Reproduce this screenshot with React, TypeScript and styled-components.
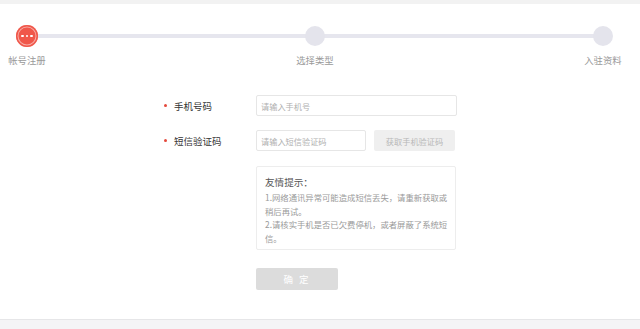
import React from "react";
import styled, { createGlobalStyle } from "styled-components";

const GlobalStyle = createGlobalStyle`
  html, body { margin: 0; padding: 0; background: #fff; }
  body { font-family: "Noto Sans CJK SC", "Noto Sans", sans-serif; }
  * { box-sizing: border-box; }
`;

const Page = styled.div`
  width: 640px;
  height: 329px;
  display: flex;
  flex-direction: column;
  background: #fff;
  overflow: hidden;
`;

const TopBand = styled.div`
  height: 4px;
  background: #f2f2f2;
  flex: none;
`;

const Stepper = styled.div`
  position: relative;
  display: flex;
  justify-content: space-between;
  padding: 21px 18px 0 8px;
`;

const Track = styled.div`
  position: absolute;
  top: 30px;
  left: 27px;
  right: 37px;
  height: 4px;
  background: #e6e6ee;
  border-radius: 2px;
`;

const Step = styled.div`
  position: relative;
  width: 38px;
  display: flex;
  flex-direction: column;
  align-items: center;
`;

const CircleSlot = styled.div`
  height: 22px;
  display: flex;
  align-items: center;
  justify-content: center;
`;

const Circle = styled.div<{ $active?: boolean }>`
  width: ${(p) => (p.$active ? 22 : 20)}px;
  height: ${(p) => (p.$active ? 22 : 20)}px;
  border-radius: 50%;
  background: ${(p) => (p.$active ? "#f0574a" : "#e4e4ec")};
  box-shadow: ${(p) =>
    p.$active
      ? "inset 0 0 0 1.5px #f0574a, inset 0 0 0 2.5px rgba(255,255,255,0.5)"
      : "none"};
  display: flex;
  align-items: center;
  justify-content: center;
  gap: 2px;
`;

const Dot = styled.span`
  width: 2.4px;
  height: 2.4px;
  border-radius: 50%;
  background: #fff;
`;

const StepLabel = styled.div`
  margin-top: 7px;
  font-size: 9.4px;
  line-height: 12px;
  color: #9a9a9a;
  white-space: nowrap;
`;

const Form = styled.div`
  display: flex;
  flex-direction: column;
  padding-left: 163px;
  margin-top: 29px;
`;

const Row = styled.div<{ $gap?: number }>`
  display: flex;
  align-items: center;
  margin-bottom: ${(p) => p.$gap ?? 14}px;
`;

const Label = styled.div`
  width: 93px;
  display: flex;
  align-items: center;
  font-size: 9.5px;
  color: #333;
  white-space: nowrap;
`;

const Required = styled.span`
  width: 3px;
  height: 3px;
  border-radius: 50%;
  background: #e5483b;
  margin-right: 7px;
  margin-left: 1px;
`;

const Field = styled.div`
  display: flex;
  gap: 8px;
`;

const Input = styled.input<{ $w: number }>`
  width: ${(p) => p.$w}px;
  height: 21px;
  border: 1px solid #e6e6e6;
  border-radius: 2px;
  padding: 0 4px;
  font-family: inherit;
  font-size: 8.2px;
  color: #333;
  outline: none;
  &::placeholder { color: #b0b0b0; }
`;

const CodeButton = styled.button`
  width: 81px;
  height: 21px;
  border: none;
  border-radius: 2px;
  background: #efefef;
  color: #b8b8b8;
  font-family: inherit;
  font-size: 8.2px;
  padding: 0;
`;

const Indent = styled.div`
  margin-left: 93px;
  display: flex;
  flex-direction: column;
  align-items: flex-start;
`;

const Tips = styled.div`
  width: 200px;
  height: 84px;
  border: 1px solid #ededed;
  border-radius: 2px;
  padding: 9px 7px 0 8px;
  margin-bottom: 18px;
`;

const TipsTitle = styled.div`
  font-size: 9.6px;
  line-height: 13px;
  color: #555;
  margin-bottom: 2px;
`;

const TipsText = styled.div`
  font-size: 8.35px;
  line-height: 13.7px;
  color: #9a9a9a;
`;

const Confirm = styled.button`
  display: block;
  width: 82px;
  height: 22px;
  border: none;
  border-radius: 2px;
  background: #dcdcdc;
  color: #fff;
  font-family: inherit;
  font-size: 9.5px;
  letter-spacing: 2px;
  padding: 0;
`;

const BottomBand = styled.div`
  margin-top: auto;
  height: 10px;
  flex: none;
  border-top: 1px solid #e6e6e8;
  background: #f4f4f6;
`;

const steps = [
  { label: "帐号注册", active: true },
  { label: "选择类型", active: false },
  { label: "入驻资料", active: false },
];

export default function App() {
  return (
    <>
      <GlobalStyle />
      <Page>
        <TopBand />
        <Stepper>
          <Track />
          {steps.map((s) => (
            <Step key={s.label}>
              <CircleSlot>
                <Circle $active={s.active}>
                  {s.active && (
                    <>
                      <Dot />
                      <Dot />
                      <Dot />
                    </>
                  )}
                </Circle>
              </CircleSlot>
              <StepLabel>{s.label}</StepLabel>
            </Step>
          ))}
        </Stepper>
        <Form>
          <Row>
            <Label>
              <Required />
              手机号码
            </Label>
            <Field>
              <Input $w={201} placeholder="请输入手机号" />
            </Field>
          </Row>
          <Row $gap={15}>
            <Label>
              <Required />
              短信验证码
            </Label>
            <Field>
              <Input $w={110} placeholder="请输入短信验证码" />
              <CodeButton>获取手机验证码</CodeButton>
            </Field>
          </Row>
          <Indent>
            <Tips>
              <TipsTitle>友情提示：</TipsTitle>
              <TipsText>1.网络通讯异常可能造成短信丢失，请重新获取或稍后再试。</TipsText>
              <TipsText>2.请核实手机是否已欠费停机，或者屏蔽了系统短信。</TipsText>
            </Tips>
            <Confirm>确 定</Confirm>
          </Indent>
        </Form>
        <BottomBand />
      </Page>
    </>
  );
}
